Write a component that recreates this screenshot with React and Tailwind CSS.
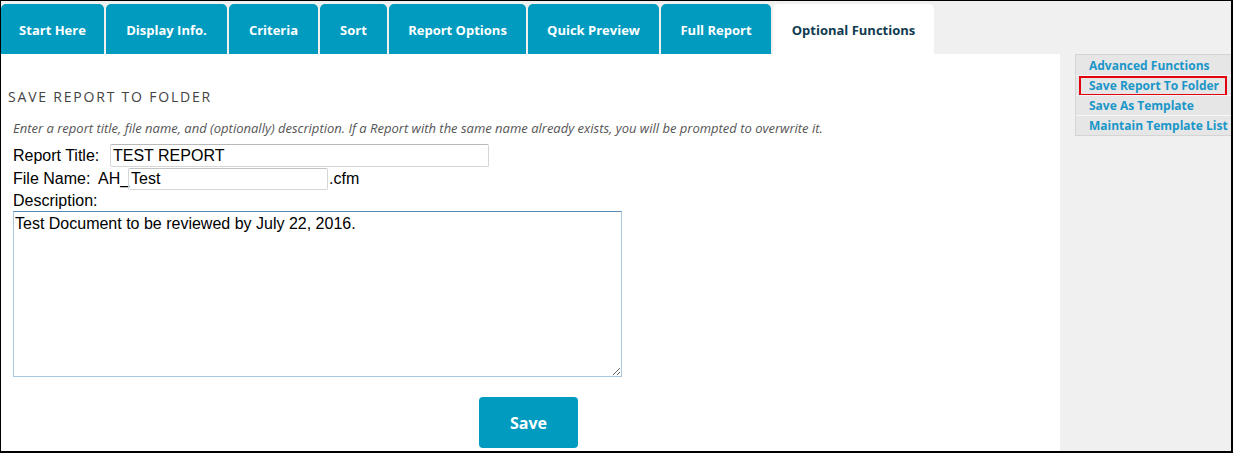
import React from "react";

const tabs = [
  { label: "Start Here", w: "w-[103px]" },
  { label: "Display Info.", w: "w-[121px]" },
  { label: "Criteria", w: "w-[89px]" },
  { label: "Sort", w: "w-[67px]" },
  { label: "Report Options", w: "w-[137px]" },
  { label: "Quick Preview", w: "w-[131px]" },
  { label: "Full Report", w: "w-[110px]" },
];

const links = ["Advanced Functions", "Save Report To Folder", "Save As Template", "Maintain Template List"];

export default function App() {
  return (
    <div className="w-[1233px] h-[453px] box-border border-black border-t border-l border-r-2 border-b-2 bg-[#f0f0f0] flex flex-col overflow-hidden font-['Open_Sans',sans-serif]">
      {/* Tabs */}
      <div className="h-[53px] pt-[3px] flex gap-[2px] shrink-0">
        {tabs.map((t) => (
          <div
            key={t.label}
            className={`${t.w} h-[50px] pt-[3px] rounded-t-[5px] bg-[#009bbf] text-white text-[13px] font-bold flex items-center justify-center`}
          >
            {t.label}
          </div>
        ))}
        <div className="w-[161px] h-[50px] pt-[3px] rounded-t-[5px] bg-white text-[#0f3a4f] text-[13px] font-bold flex items-center justify-center">
          Optional Functions
        </div>
      </div>

      <div className="flex flex-1 min-h-0">
        {/* Main */}
        <div className="w-[1059px] bg-white flex flex-col shrink-0">
          <div className="mt-[33px] ml-[7px] h-[20px] leading-[20px] text-[14px] tracking-[1.8px] text-[#444]">
            SAVE REPORT TO FOLDER
          </div>
          <div className="mt-[13px] ml-[12px] h-[16px] leading-[16px] text-[13px] italic text-[#555] whitespace-nowrap">
            Enter a report title, file name, and (optionally) description. If a Report with the same name already exists, you will be prompted to overwrite it.
          </div>
          <div className="ml-[12px] font-['Liberation_Sans',sans-serif] text-[16px] text-black">
            <div className="mt-[8px] flex items-center h-[23px]">
              <span className="w-[97px]">Report Title:</span>
              <div className="w-[379px] h-[23px] box-border border border-[#d6d6d6] border-t-[#b8b8b8] rounded-[2px] pl-[2px] leading-[21px]">
                TEST REPORT
              </div>
            </div>
            <div className="flex items-center h-[23px]">
              <span className="w-[85px]">File Name:</span>
              <span className="w-[30px]">AH_</span>
              <div className="w-[200px] h-[22px] box-border border border-[#d6d6d6] border-t-[#c4c4c4] rounded-[2px] pl-[2px] leading-[20px]">
                Test
              </div>
              <span className="ml-[1px]">.cfm</span>
            </div>
            <div className="h-[21px] leading-[21px]">Description:</div>
            <textarea
              readOnly
              defaultValue="Test Document to be reviewed by July 22, 2016."
              className="block w-[609px] h-[166px] box-border border border-[#a9c7df] border-t-[#5a88ae] px-[1px] pt-[2px] text-[16px] leading-[19px] font-['Liberation_Sans',sans-serif] text-black outline-none resize"
            />
          </div>
          <button className="mt-[20px] ml-[478px] w-[99px] h-[51px] pt-[1px] rounded-[4px] bg-[#009bbf] text-white text-[16px] font-bold">
            Save
          </button>
        </div>

        {/* Sidebar */}
        <div className="flex-1 pl-[15px]">
          <div className="w-[170px] box-border border border-[#d4d4d4] bg-[#e6e6e6]">
            {links.map((l, i) => (
              <div
                key={l}
                className={`relative h-[20px] flex items-center pl-[13px] pt-[1px] text-[12px] font-bold text-[#1a96c8] ${i > 0 ? "border-t border-[#f6f6f6]" : ""}`}
              >
                {l}
                {i === 1 && (
                  <div className="absolute left-[3px] top-[0px] w-[148px] h-[20px] border-2 border-[#e3000f]" />
                )}
              </div>
            ))}
          </div>
        </div>
      </div>
    </div>
  );
}
